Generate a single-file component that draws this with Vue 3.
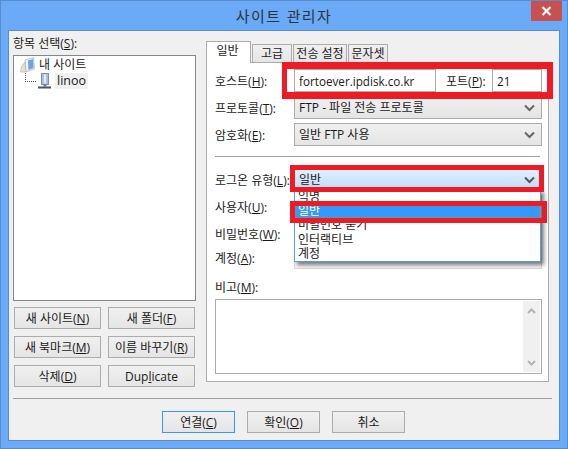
<template>
  <div class="window">
    <div class="titlebar">
      <span class="title">사이트 관리자</span>
      <div class="close">
        <svg width="11" height="10" viewBox="0 0 11 10"><path d="M1.5 1 L9.5 9 M9.5 1 L1.5 9" stroke="#fff" stroke-width="2.2" fill="none" /></svg>
      </div>
    </div>

    <div class="client">
      <div class="top">
        <div class="left">
          <div class="caption">항목 선택(<u>S</u>):</div>
          <div class="tree">
            <div class="node">
              <svg class="folder" width="15" height="16" viewBox="0 0 15 16">
                <path d="M5 3 L13.5 0.5 L14.5 12 L6 15 Z" fill="#eef3fb" stroke="#a9bcd6" stroke-width="0.8" />
                <path d="M8 3.5 L13 2 L13.6 11 L8.5 13 Z" fill="#6ea3e0" />
                <path d="M0.5 15 L1.5 10 L5 5 L6 15 Z" fill="#e6e1d2" stroke="#b8b2a0" stroke-width="0.7" />
              </svg>
              <span class="node-text">내 사이트</span>
            </div>
            <div class="node child">
              <span class="connector"></span>
              <svg class="server" width="13" height="16" viewBox="0 0 13 16">
                <rect x="3.5" y="0.5" width="7" height="11" fill="#a9c1e6" stroke="#7f8fa8" />
                <rect x="6" y="1.5" width="2" height="9" fill="#e4edf9" />
                <rect x="5.5" y="11.5" width="3" height="2" fill="#6b7688" />
                <rect x="0" y="13.5" width="13" height="2" fill="#4c5566" />
              </svg>
              <span class="node-text selected">linoo</span>
            </div>
          </div>
          <div class="site-buttons">
            <button v-for="b in siteButtons" :key="b.text" class="btn">
              {{ b.text }}<template v-if="b.key">(<u>{{ b.key }}</u>)</template>
            </button>
            <button class="btn">Dup<u>l</u>icate</button>
          </div>
        </div>

        <div class="right">
          <div class="tabs">
            <div
              v-for="(t, i) in tabs"
              :key="t"
              class="tab"
              :class="{ active: i === 0 }"
            >{{ t }}</div>
          </div>
          <div class="panel">
            <div class="row">
              <label>호스트(<u>H</u>):</label>
              <input class="field host" value="fortoever.ipdisk.co.kr" readonly />
              <label class="port-label">포트(<u>P</u>):</label>
              <input class="field port" value="21" readonly />
            </div>
            <div class="row">
              <label>프로토콜(<u>T</u>):</label>
              <div class="select">
                FTP - 파일 전송 프로토콜
                <svg class="chev" width="11" height="8" viewBox="0 0 11 8"><path d="M1 1.5 L5.5 6 L10 1.5" stroke="#666" stroke-width="2" fill="none" /></svg>
              </div>
            </div>
            <div class="row">
              <label>암호화(<u>E</u>):</label>
              <div class="select">
                일반 FTP 사용
                <svg class="chev" width="11" height="8" viewBox="0 0 11 8"><path d="M1 1.5 L5.5 6 L10 1.5" stroke="#666" stroke-width="2" fill="none" /></svg>
              </div>
            </div>

            <div class="rule"></div>

            <div class="row">
              <label>로그온 유형(<u>L</u>):</label>
              <div class="select open">
                일반
                <svg class="chev" width="11" height="8" viewBox="0 0 11 8"><path d="M1 1.5 L5.5 6 L10 1.5" stroke="#555" stroke-width="2" fill="none" /></svg>
              </div>
            </div>
            <div class="row">
              <label>사용자(<u>U</u>):</label>
              <div class="field disabled"></div>
            </div>
            <div class="row">
              <label>비밀번호(<u>W</u>):</label>
              <div class="field disabled"></div>
            </div>
            <div class="row account">
              <label>계정(<u>A</u>):</label>
              <div class="field disabled"></div>
            </div>

            <div class="memo-label">비고(<u>M</u>):</div>
            <div class="memo">
              <div class="scrollbar">
                <svg width="9" height="6" viewBox="0 0 9 6"><path d="M1 5 L4.5 1.5 L8 5" stroke="#b4b4b4" stroke-width="2" fill="none" /></svg>
                <svg width="9" height="6" viewBox="0 0 9 6"><path d="M1 1 L4.5 4.5 L8 1" stroke="#b4b4b4" stroke-width="2" fill="none" /></svg>
              </div>
            </div>

            <div class="dropdown">
              <div
                v-for="o in logonTypes"
                :key="o"
                class="option"
                :class="{ current: o === '일반' }"
              >{{ o }}</div>
            </div>
          </div>
        </div>
      </div>

      <div class="separator"></div>

      <div class="footer">
        <button class="btn primary">연결(<u>C</u>)</button>
        <button class="btn">확인(<u>O</u>)</button>
        <button class="btn">취소</button>
      </div>
    </div>

    <!-- red marks drawn over the screenshot -->
    <div class="mark mark-host"></div>
    <div class="mark mark-type"></div>
    <div class="mark mark-option"></div>
  </div>
</template>

<script setup>
const siteButtons = [
  { text: "새 사이트", key: "N" },
  { text: "새 폴더", key: "F" },
  { text: "새 북마크", key: "M" },
  { text: "이름 바꾸기", key: "R" },
  { text: "삭제", key: "D" },
];

const tabs = ["일반", "고급", "전송 설정", "문자셋"];

const logonTypes = ["익명", "일반", "비밀번호 묻기", "인터랙티브", "계정"];
</script>

<style>
html,
body {
  margin: 0;
  background: #fff;
}
</style>

<style scoped>
* {
  box-sizing: border-box;
}

.window {
  position: relative;
  width: 568px;
  height: 449px;
  padding: 0 7px 7px 7px;
  background: #6aaaf6;
  border: 1px solid #5a8ccd;
  font-family: "Open Sans", "Noto Sans CJK KR", sans-serif;
  font-size: 12px;
  color: #1a1a1a;
  overflow: hidden;
}

.titlebar {
  position: relative;
  height: 29px;
  display: flex;
  align-items: center;
  justify-content: center;
}

.title {
  font-size: 15px;
  letter-spacing: 1.4px;
  color: #2a3340;
}

.close {
  position: absolute;
  top: 0;
  right: -2px;
  width: 31px;
  height: 20px;
  background: #c75050;
  display: flex;
  align-items: center;
  justify-content: center;
}

.client {
  width: 552px;
  height: 411px;
  padding: 5px 7px 0 5px;
  background: #f0f0f0;
  border: 1px solid #5a8ccd;
}

.top {
  display: flex;
  gap: 10px;
  padding-right: 4px;
  height: 351px;
  margin-left: -1px;
}

.left {
  width: 183px;
  flex: none;
}

.caption {
  height: 16px;
  line-height: 16px;
  margin-bottom: 3px;
}

.tree {
  height: 246px;
  background: #fff;
  border: 1px solid #828790;
  padding: 1px 0 0 6px;
}

.node {
  display: flex;
  align-items: center;
  height: 16px;
}

.folder {
  flex: none;
  margin-right: 4px;
}

.child {
  padding-left: 5px;
}

.connector {
  flex: none;
  width: 11px;
  height: 9px;
  margin-top: -8px;
  border-left: 1px dotted #555;
  border-bottom: 1px dotted #555;
}

.server {
  flex: none;
  margin: 0 4px 0 2px;
}

.node-text {
  line-height: 16px;
  white-space: nowrap;
}

.selected {
  padding: 0 2px;
  background: #f0f0f0;
  font-size: 12.5px;
}

.site-buttons {
  display: grid;
  grid-template-columns: 87px 87px;
  grid-auto-rows: 22px;
  column-gap: 7px;
  row-gap: 7px;
  margin: 6px 0 0 1px;
}

.btn {
  height: 22px;
  padding: 0;
  font: inherit;
  color: inherit;
  background: linear-gradient(#f0f0f0, #e5e5e5);
  border: 1px solid #acacac;
  white-space: nowrap;
}

.right {
  flex: 1;
  padding-top: 5px;
}

.tabs {
  display: flex;
  align-items: flex-end;
  height: 21px;
  gap: 1px;
}

.tab {
  height: 18px;
  line-height: 17px;
  min-width: 40px;
  text-align: center;
  background: linear-gradient(#f0f0f0, #e5e5e5);
  border: 1px solid #acacac;
  border-bottom: none;
  white-space: nowrap;
}

.tab:nth-child(3) {
  width: 54px;
}

.tab.active {
  position: relative;
  z-index: 1;
  width: 45px;
  height: 22px;
  line-height: 18px;
  margin-bottom: -1px;
  background: #fff;
  padding-right: 2px;
}

.panel {
  position: relative;
  height: 320px;
  padding: 6px 6px 0 8px;
  background: #fff;
  border: 1px solid #acacac;
}

.row {
  display: flex;
  align-items: center;
  height: 23px;
  margin-bottom: 4px;
}

.row label {
  flex: none;
  width: 79px;
  white-space: nowrap;
}

.row .port-label {
  width: 46px;
  margin-left: 10px;
}

.field {
  height: 23px;
  padding: 0 4px;
  font: inherit;
  font-size: 11.7px;
  color: inherit;
  background: #fff;
  border: 1px solid #acacac;
  outline: none;
  border-radius: 0;
  flex: 1;
}

.host {
  flex: none;
  width: 142px;
}

.port {
  flex: none;
  width: 50px;
}

.disabled {
  background: #f5f5f5;
  border-color: #d9d9d9;
}

.select {
  position: relative;
  flex: 1;
  height: 23px;
  line-height: 21px;
  padding-left: 4px;
  background: linear-gradient(#f0f0f0, #e5e5e5);
  border: 1px solid #acacac;
}

.select.open {
  background: linear-gradient(#e4f1fd, #bcdafa);
  border-color: #7eb4ea;
}

.chev {
  position: absolute;
  right: 6px;
  top: 7px;
}

.rule {
  height: 1px;
  margin: 10px 2px 11px 0;
  background: #a0a0a0;
}

.account {
  margin-top: -3px;
  margin-bottom: 0;
}

.memo-label {
  height: 16px;
  line-height: 16px;
  margin-top: 11px;
  margin-bottom: 3px;
}

.memo {
  height: 75px;
  background: #fff;
  border: 1px solid #acacac;
  display: flex;
  justify-content: flex-end;
  padding: 1px;
}

.scrollbar {
  width: 17px;
  background: #f0f0f0;
  display: flex;
  flex-direction: column;
  justify-content: space-between;
  align-items: center;
  padding: 7px 0 6px;
}

.dropdown {
  position: absolute;
  top: 126px;
  left: 87px;
  width: 247px;
  height: 73px;
  background: #fff;
  border: 1px solid #5a9ce0;
  box-shadow: 3px 3px 4px rgba(0, 0, 0, 0.5);
  z-index: 2;
}

.option {
  height: 14.2px;
  line-height: 14px;
  padding-left: 3px;
  white-space: nowrap;
}

.current {
  background: #3399ff;
  color: #fff;
  outline: 1px dotted #c08040;
  outline-offset: -1px;
}

.separator {
  height: 1px;
  margin-top: 11px;
  margin-left: -1px;
  background: #a0a0a0;
}

.footer {
  display: flex;
  gap: 12px;
  padding-left: 148px;
  margin-top: 12px;
}

.footer .btn {
  width: 73px;
}

.primary {
  border-color: #3399ff;
}

.mark {
  position: absolute;
  border: 5px solid #ed1c24;
  z-index: 5;
}

.mark-host {
  left: 281px;
  top: 61px;
  width: 271px;
  height: 37px;
  border-width: 7px 6px 7px 5px;
}

.mark-type {
  left: 289px;
  top: 164px;
  width: 254px;
  height: 27px;
}

.mark-option {
  left: 289px;
  top: 200px;
  width: 257px;
  height: 22px;
}
</style>
